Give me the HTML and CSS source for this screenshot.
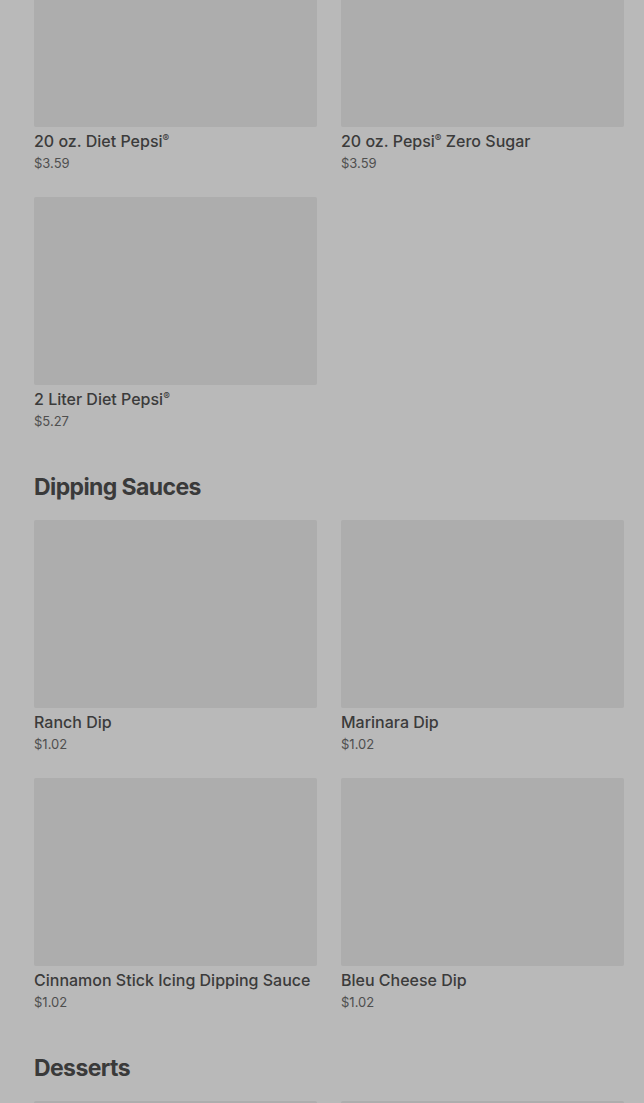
FILE: index.html
```html
<!DOCTYPE html>
<html lang="en">
<head>
<meta charset="utf-8">
<title>Menu</title>
<link rel="stylesheet" href="styles.css">
</head>
<body>
<main class="menu">
  <section class="section section-first">
    <div class="grid">
      <div class="card"><div class="thumb"></div><div class="name">20 oz. Diet Pepsi<span class="reg">®</span></div><div class="price">$3.59</div></div>
      <div class="card"><div class="thumb"></div><div class="name">20 oz. Pepsi<span class="reg">®</span> Zero Sugar</div><div class="price">$3.59</div></div>
      <div class="card"><div class="thumb"></div><div class="name">2 Liter Diet Pepsi<span class="reg">®</span></div><div class="price">$5.27</div></div>
    </div>
  </section>
  <section class="section">
    <h2 class="heading">Dipping Sauces</h2>
    <div class="grid">
      <div class="card"><div class="thumb"></div><div class="name">Ranch Dip</div><div class="price">$1.02</div></div>
      <div class="card"><div class="thumb"></div><div class="name">Marinara Dip</div><div class="price">$1.02</div></div>
      <div class="card"><div class="thumb"></div><div class="name">Cinnamon Stick Icing Dipping Sauce</div><div class="price">$1.02</div></div>
      <div class="card"><div class="thumb"></div><div class="name">Bleu Cheese Dip</div><div class="price">$1.02</div></div>
    </div>
  </section>
  <section class="section">
    <h2 class="heading">Desserts</h2>
    <div class="grid">
      <div class="card"><div class="thumb"></div></div>
      <div class="card"><div class="thumb"></div></div>
    </div>
  </section>
</main>
</body>
</html>
```

FILE: styles.css
```css
html, body {
  margin: 0;
  padding: 0;
  background: #b9b9b9;
  overflow: hidden;
}
body {
  font-family: "Inter", "Roboto", "Liberation Sans", sans-serif;
  color: #3b3b3b;
  height: 1103px;
}
.menu {
  padding: 0 20px 0 34px;
  margin-top: -61px;
}
.section {
  display: flex;
  flex-direction: column;
}
.heading {
  margin: 42px 0 17px;
  font-size: 23px;
  line-height: 32px;
  font-weight: 700;
  letter-spacing: -0.6px;
  color: #3a3a3a;
}
.grid {
  display: grid;
  grid-template-columns: 283px 283px;
  column-gap: 24px;
  row-gap: 26px;
}
.card {
  display: flex;
  flex-direction: column;
}
.thumb {
  height: 188px;
  background: #adadad;
  border-radius: 2px;
}
.name {
  margin-top: 4px;
  font-size: 16px;
  line-height: 20px;
  font-weight: 500;
  color: #3b3b3b;
  white-space: nowrap;
}
.reg {
  font-size: 10px;
  line-height: 0;
  vertical-align: 5px;
}
.price {
  margin-top: 4px;
  font-size: 13px;
  line-height: 16px;
  font-weight: 400;
  color: #4f4f4f;
}
```
